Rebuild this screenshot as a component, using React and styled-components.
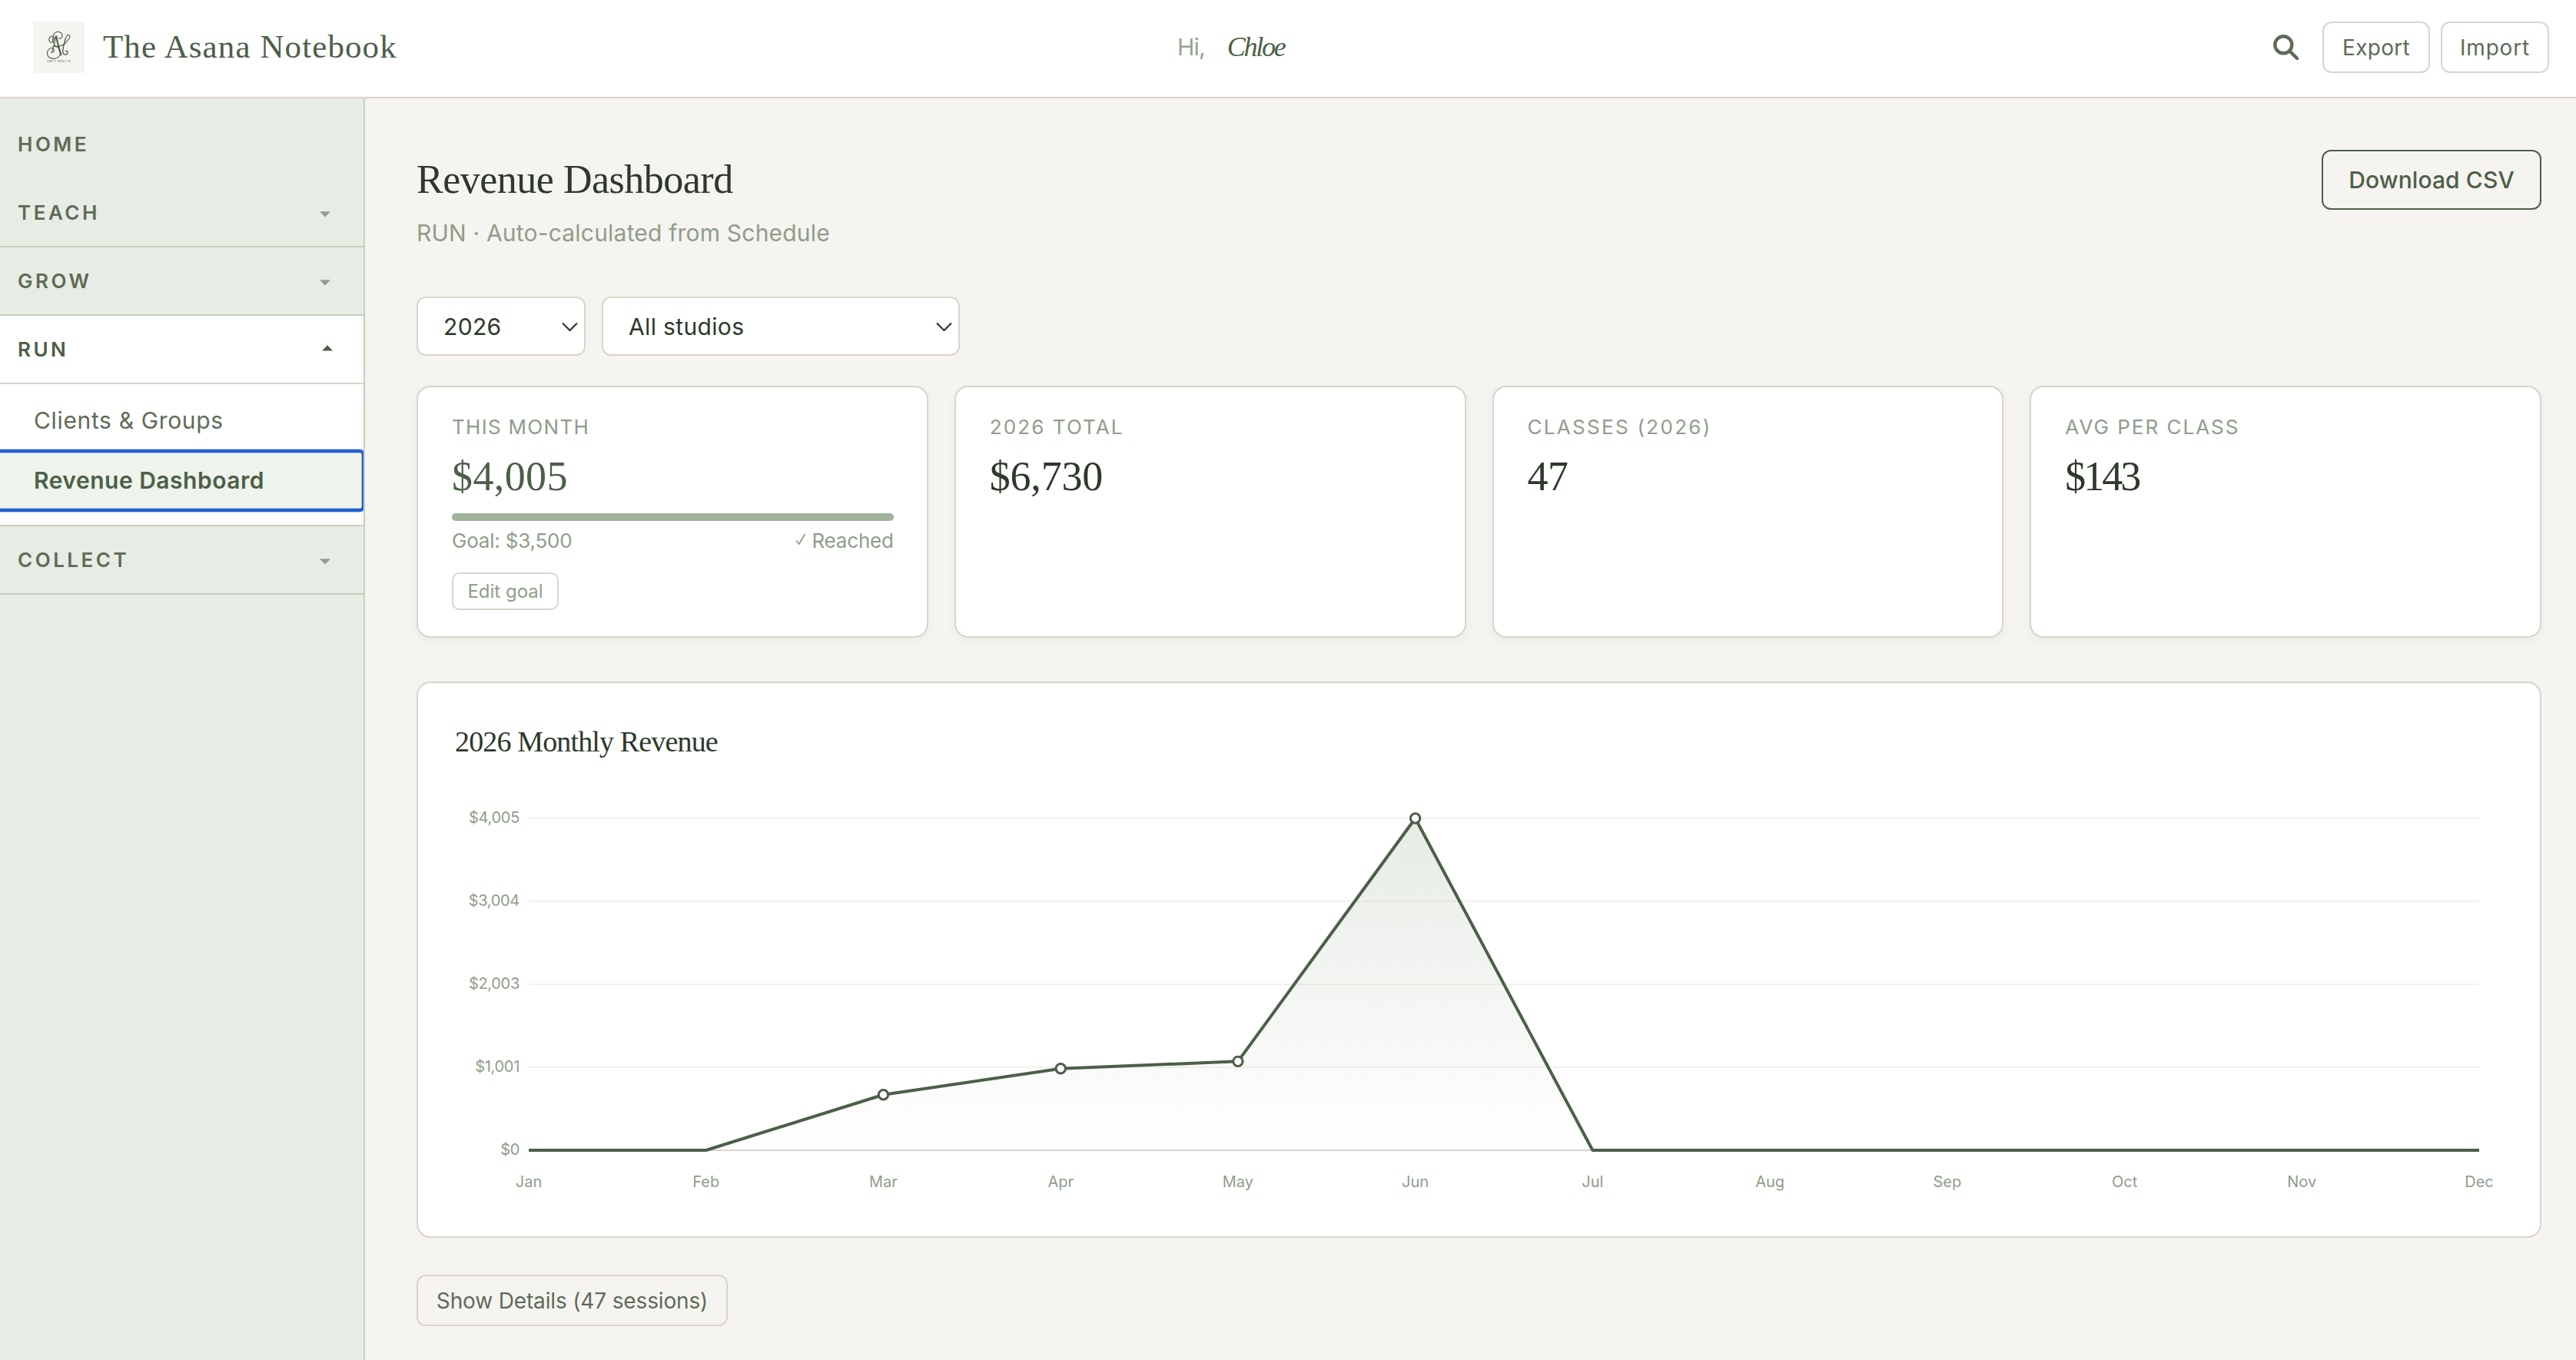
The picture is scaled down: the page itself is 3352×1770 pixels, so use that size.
import styled, { createGlobalStyle, css } from "styled-components";

const sans = `Inter, "Noto Sans", sans-serif`;
const serif = `"Liberation Serif", "Times New Roman", serif`;

const c = {
  bg: "#f6f4f0",
  line: "#dad5cb",
  sage: "#e7ece4",
  sageLine: "#c3d1bd",
  forest: "#4c5f48",
  moss: "#5e6b58",
  muted: "#8f9d8a",
  ink: "#2d392a",
};

const GlobalStyle = createGlobalStyle`
  *, *::before, *::after { box-sizing: border-box; }

  body {
    margin: 0;
    background: ${c.bg};
    color: ${c.ink};
    font-family: ${sans};
  }

  button, select { font-family: inherit; }
`;

const Page = styled.div`
  display: flex;
  flex-direction: column;
  height: 1770px;
  overflow: hidden;
`;

/* ---------- Header ---------- */

const Header = styled.header`
  display: flex;
  align-items: flex-start;
  height: 128px;
  padding: 28px 35px 0 43px;
  background: #fff;
  border-bottom: 2px solid ${c.line};
`;

const Brand = styled.div`
  display: flex;
  align-items: center;
  gap: 24px;
  width: 1489px;
`;

const Logo = styled.svg`
  display: block;
  width: 67px;
  height: 67px;
  background: ${c.bg};
`;

const BrandName = styled.span`
  font-family: ${serif};
  font-size: 43px;
  line-height: 65px;
  letter-spacing: 1.1px;
  color: ${c.forest};
  padding-bottom: 2px;
`;

const Greeting = styled.div`
  display: flex;
  align-items: center;
  gap: 29px;
  flex: 1;
  height: 65px;
`;

const Hi = styled.span`
  font-size: 30px;
  letter-spacing: -0.8px;
  color: #96a391;
`;

const UserName = styled.span`
  font-family: ${serif};
  font-style: italic;
  font-size: 36px;
  letter-spacing: -2.3px;
  color: ${c.forest};
`;

const Tools = styled.div`
  display: flex;
  align-items: center;
  gap: 14px;
`;

const SearchIcon = styled.svg`
  display: block;
  width: 34px;
  height: 34px;
  margin-right: 16px;
`;

const Button = styled.button`
  display: flex;
  align-items: center;
  justify-content: center;
  padding: 0;
  width: ${(p) => p.$w}px;
  height: 67px;
  border: 2px solid ${c.line};
  border-radius: 12px;
  background: transparent;
  color: ${c.moss};
  font-size: 28px;
  letter-spacing: ${(p) => p.$track || 0}px;

  ${(p) =>
    p.$variant === "primary" &&
    css`
      height: 78px;
      border-color: ${c.forest};
      color: ${c.forest};
      font-size: 30px;
      font-weight: 500;
    `}

  ${(p) =>
    p.$variant === "small" &&
    css`
      height: 49px;
      border-radius: 10px;
      color: ${c.muted};
      font-size: 24px;
    `}
`;

/* ---------- Sidebar ---------- */

const Body = styled.div`
  display: flex;
  flex: 1;
`;

const Sidebar = styled.nav`
  width: 475px;
  padding-top: 16px;
  background: ${c.sage};
  border-right: 2px solid ${c.sageLine};
`;

const NavHead = styled.div`
  display: flex;
  align-items: center;
  justify-content: space-between;
  height: 89px;
  padding: 0 43px 0 23px;
  border-bottom: 2px solid ${(p) => (p.$plain ? "transparent" : c.sageLine)};
  font-size: 26px;
  font-weight: 600;
  letter-spacing: 3.5px;
  color: ${c.moss};

  ${(p) =>
    p.$open &&
    css`
      padding-right: 40px;
      background: #fff;
      border-bottom-color: ${c.line};
      color: ${c.forest};
    `}
`;

const Caret = styled.svg`
  display: block;
  width: 14px;
  height: 8px;
  margin-top: ${(p) => (p.$open ? -4 : 5)}px;
  fill: ${(p) => (p.$open ? c.forest : "#929c90")};
`;

const SubList = styled.div`
  height: 185px;
  padding-top: 8px;
  overflow: hidden;
  background: #fff;
  border-bottom: 2px solid ${c.sageLine};
`;

const SubItem = styled.div`
  display: flex;
  align-items: center;
  height: 78px;
  margin: 0 -1px 0 -6px;
  padding-left: 50px;
  font-size: 30px;
  letter-spacing: 0.65px;
  color: ${c.moss};

  ${(p) =>
    p.$active &&
    css`
      height: 79px;
      padding-bottom: 1px;
      border-radius: 6px;
      background: #eef3ec;
      color: ${c.forest};
      font-weight: 600;
      letter-spacing: 0.5px;
      outline: 4px solid #265ed0;
      outline-offset: -3px;
      box-shadow: 0 0 0 2px rgba(38, 94, 208, 0.35), inset 0 0 0 4px rgba(38, 94, 208, 0.35);
    `}
`;

/* ---------- Main ---------- */

const Main = styled.main`
  flex: 1;
  padding: 67px 45px 0 67px;
`;

const TitleRow = styled.div`
  display: flex;
  align-items: flex-start;
  justify-content: space-between;
`;

const Title = styled.h1`
  margin: 0;
  font-family: ${serif};
  font-weight: 400;
  font-size: 52px;
  line-height: 77px;
  letter-spacing: -0.5px;
`;

const Subtitle = styled.p`
  margin: 0 0 52px;
  font-size: 30px;
  line-height: 62px;
  letter-spacing: 0.2px;
  color: ${c.muted};
`;

const Filters = styled.div`
  display: flex;
  gap: 21px;
  margin-bottom: 39px;
`;

const Select = styled.div`
  display: flex;
  align-items: center;
  justify-content: space-between;
  width: ${(p) => p.$w}px;
  height: 77px;
  padding: 0 8px 0 33px;
  border: 2px solid ${c.line};
  border-radius: 12px;
  background: #fff;
  font-size: 30px;
  letter-spacing: 0.35px;
`;

const Chevron = styled.svg`
  display: block;
  width: 21px;
  height: 12px;
`;

const Stats = styled.div`
  display: grid;
  grid-template-columns: repeat(4, 1fr);
  gap: 34px;
  margin-bottom: 57px;
`;

const StatCard = styled.div`
  height: 328px;
  padding: 34px 43px 34px 44px;
  background: #fff;
  border: 2px solid ${c.line};
  border-radius: 18px;
  box-shadow: 0 4px 12px rgba(45, 57, 42, 0.05);
`;

const StatLabel = styled.div`
  font-size: 26px;
  line-height: 35px;
  letter-spacing: ${(p) => p.$track || 2.1}px;
  color: ${c.muted};
`;

const StatValue = styled.div`
  font-family: ${serif};
  font-size: 54px;
  line-height: 94px;
  letter-spacing: ${(p) => p.$track || 0}px;
  color: ${(p) => (p.$accent ? c.forest : c.ink)};
`;

const Track = styled.div`
  height: 10px;
  margin-top: 1px;
  border-radius: 5px;
  background: ${c.sage};
`;

const Fill = styled.div`
  width: 100%;
  height: 100%;
  border-radius: 5px;
  background: #a2b39b;
`;

const GoalRow = styled.div`
  display: flex;
  justify-content: space-between;
  margin-bottom: 16px;
  font-size: 26px;
  line-height: 51px;
  letter-spacing: -0.2px;
  color: ${c.muted};
`;

const Reached = styled.span`
  display: flex;
  align-items: center;
  gap: 7px;
`;

const Check = styled.svg`
  display: block;
  width: 14px;
  height: 16px;
  margin-top: -3px;
`;

const ChartCard = styled.section`
  height: 724px;
  margin-bottom: 48px;
  padding: 44px 48px 0;
  background: #fff;
  border: 2px solid ${c.line};
  border-radius: 18px;
`;

const ChartTitle = styled.h2`
  margin: 0;
  font-family: ${serif};
  font-weight: 400;
  font-size: 38px;
  line-height: 64px;
  letter-spacing: -0.85px;
`;

const ChartSvg = styled.svg`
  display: block;
  width: 100%;
  height: 564px;
  font-family: ${sans};
  font-size: 20px;

  text { fill: ${c.muted}; }
`;

const NAV = [
  { label: "HOME", plain: true },
  { label: "TEACH" },
  { label: "GROW" },
  { label: "RUN", items: ["Clients & Groups", "Revenue Dashboard"] },
  { label: "COLLECT" },
];

const MONTHS = [
  ["Jan", 0],
  ["Feb", 0],
  ["Mar", 670],
  ["Apr", 985],
  ["May", 1072],
  ["Jun", 4005],
  ["Jul", 0],
  ["Aug", 0],
  ["Sep", 0],
  ["Oct", 0],
  ["Nov", 0],
  ["Dec", 0],
];

const TICKS = ["$4,005", "$3,004", "$2,003", "$1,001", "$0"];

const LEFT = 96;
const RIGHT = 2634;
const TOP = 68;
const BOTTOM = 500;

function RevenueChart() {
  const pts = MONTHS.map(([month, value], i) => ({
    month,
    value,
    x: LEFT + (i * (RIGHT - LEFT)) / (MONTHS.length - 1),
    y: BOTTOM - (value / 4005) * (BOTTOM - TOP),
  }));
  const line = pts.map((p) => `${p.x},${p.y}`).join(" ");

  return (
    <ChartSvg viewBox="0 0 2665 564">
      <defs>
        <linearGradient id="area" x1="0" y1="0" x2="0" y2="1">
          <stop offset="0" stopColor="#a2b39b" stopOpacity="0.26" />
          <stop offset="1" stopColor="#a2b39b" stopOpacity="0" />
        </linearGradient>
      </defs>

      {TICKS.map((tick, i) => {
        const y = TOP + i * 108;
        return (
          <g key={tick}>
            <line x1={LEFT} x2={RIGHT} y1={y} y2={y} strokeWidth="2" stroke={i === 4 ? c.line : "#f2f2ed"} />
            <text x="84" y={y + 6} textAnchor="end" letterSpacing="-0.3">{tick}</text>
          </g>
        );
      })}

      <polygon points={`${LEFT},${BOTTOM} ${line} ${RIGHT},${BOTTOM}`} fill="url(#area)" />
      <polyline points={line} fill="none" stroke={c.forest} strokeWidth="4" strokeLinejoin="round" />

      {pts.map((p) => (
        <g key={p.month}>
          {p.value > 0 && <circle cx={p.x} cy={p.y} r="6.2" fill="#fff" stroke={c.forest} strokeWidth="3" />}
          <text x={p.x} y="548" textAnchor="middle">{p.month}</text>
        </g>
      ))}
    </ChartSvg>
  );
}

function Monogram() {
  return (
    <Logo viewBox="0 0 67 67">
      <g fill="none" stroke={c.forest} strokeWidth="1.1" strokeLinecap="round">
        {/* top swirl running into the lower bowl */}
        <path d="M24 27.500c-4-1-4.300-6.500-.5-8.200 2.500-1 4.500 1 3.300 2.700" />
        <path d="M25.500 27c-.8-7.500 1.700-13.700 7-13.800 5 0 7 5.300 4.300 8.300-1.500 1.700-3.500.8-3-.8" />
        <path d="M30 20c-5 3.500-4.500 9 .3 12.300 5.500 3.600 7.200 8 4.200 12.200-3.500 5-11.500 5-14.500 1.200-3.400-4.500-.6-10.800 4-11.200 3.600-.3 4.600 4.200 1.600 5.500" />
        {/* stems */}
        <path d="M29.800 19.500c-1.300 8-3.200 15-5.800 21.500" />
        <path d="M30 19c1.800 8.500 3.800 16.500 6.300 24.500" strokeWidth="2.100" />
        <path d="M25.500 32.300c5 .8 11.500-.3 15.500-3.300" />
        {/* right loop */}
        <path d="M41 29c4-3.300 7.500-8.300 6.700-10.700-1-2.500-4.700-.3-5.500 4.200" />
        <path d="M42.200 22.500c-1.200 5-3.700 12.500-3.400 17 .3 4.500 5.200 4.500 6.300 1.200.6-2-1.600-3.300-2.600-1.700" strokeWidth="1.400" />
      </g>
      <text
        x="18.300"
        y="53.300"
        textLength="30.500"
        fontFamily="Inter, sans-serif"
        fontSize="3.200"
        fontWeight="600"
        fill={c.moss}
      >
        SOFT RUSTIC
      </text>
    </Logo>
  );
}

function NavCaret({ open }) {
  return (
    <Caret viewBox="0 0 14 8" $open={open}>
      <path d={open ? "M0 7.500L7 .3L14 7.500z" : "M0 .3L7 7.500L14 .3z"} />
    </Caret>
  );
}

function Dropdown({ width, children }) {
  return (
    <Select $w={width}>
      {children}
      <Chevron viewBox="0 0 21 12">
        <path d="M1 1.500L10.500 11L20 1.500" fill="none" stroke={c.ink} strokeWidth="2.200" />
      </Chevron>
    </Select>
  );
}

export default function App() {
  return (
    <Page>
      <GlobalStyle />

      <Header>
        <Brand>
          <Monogram />
          <BrandName>The Asana Notebook</BrandName>
        </Brand>

        <Greeting>
          <Hi>Hi,</Hi>
          <UserName>Chloe</UserName>
        </Greeting>

        <Tools>
          <SearchIcon viewBox="0 0 34 34">
            <g fill="none" stroke={c.moss} strokeWidth="4.400" strokeLinecap="round">
              <circle cx="13.300" cy="13.300" r="11" />
              <path d="M21.500 21.500L31 31" />
            </g>
          </SearchIcon>
          <Button $w={140} $track={0.3}>Export</Button>
          <Button $w={141} $track={0.8}>Import</Button>
        </Tools>
      </Header>

      <Body>
        <Sidebar>
          {NAV.map(({ label, plain, items }) => (
            <div key={label}>
              <NavHead $plain={plain} $open={!!items}>
                {label}
                {!plain && <NavCaret open={!!items} />}
              </NavHead>
              {items && (
                <SubList>
                  {items.map((item) => (
                    <SubItem key={item} $active={item === "Revenue Dashboard"}>
                      {item}
                    </SubItem>
                  ))}
                </SubList>
              )}
            </div>
          ))}
        </Sidebar>

        <Main>
          <TitleRow>
            <div>
              <Title>Revenue Dashboard</Title>
              <Subtitle>RUN · Auto-calculated from Schedule</Subtitle>
            </div>
            <Button $variant="primary" $w={286} $track={0.1}>Download CSV</Button>
          </TitleRow>

          <Filters>
            <Dropdown width={220}>2026</Dropdown>
            <Dropdown width={466}>All studios</Dropdown>
          </Filters>

          <Stats>
            <StatCard>
              <StatLabel $track={1.3}>THIS MONTH</StatLabel>
              <StatValue $accent $track={0.4}>$4,005</StatValue>
              <Track>
                <Fill />
              </Track>
              <GoalRow>
                <span>Goal: $3,500</span>
                <Reached>
                  <Check viewBox="0 0 14 16">
                    <path d="M1 9.500L4.800 14L12.500 1" fill="none" stroke={c.muted} strokeWidth="1.800" />
                  </Check>
                  Reached
                </Reached>
              </GoalRow>
              <Button $variant="small" $w={139}>Edit goal</Button>
            </StatCard>

            <StatCard>
              <StatLabel>2026 TOTAL</StatLabel>
              <StatValue $track={-0.2}>$6,730</StatValue>
            </StatCard>

            <StatCard>
              <StatLabel $track={2.3}>CLASSES (2026)</StatLabel>
              <StatValue $track={-0.6}>47</StatValue>
            </StatCard>

            <StatCard>
              <StatLabel $track={2}>AVG PER CLASS</StatLabel>
              <StatValue $track={-3}>$143</StatValue>
            </StatCard>
          </Stats>

          <ChartCard>
            <ChartTitle>2026 Monthly Revenue</ChartTitle>
            <RevenueChart />
          </ChartCard>

          <Button $w={405} $track={-0.15}>Show Details (47 sessions)</Button>
        </Main>
      </Body>
    </Page>
  );
}
